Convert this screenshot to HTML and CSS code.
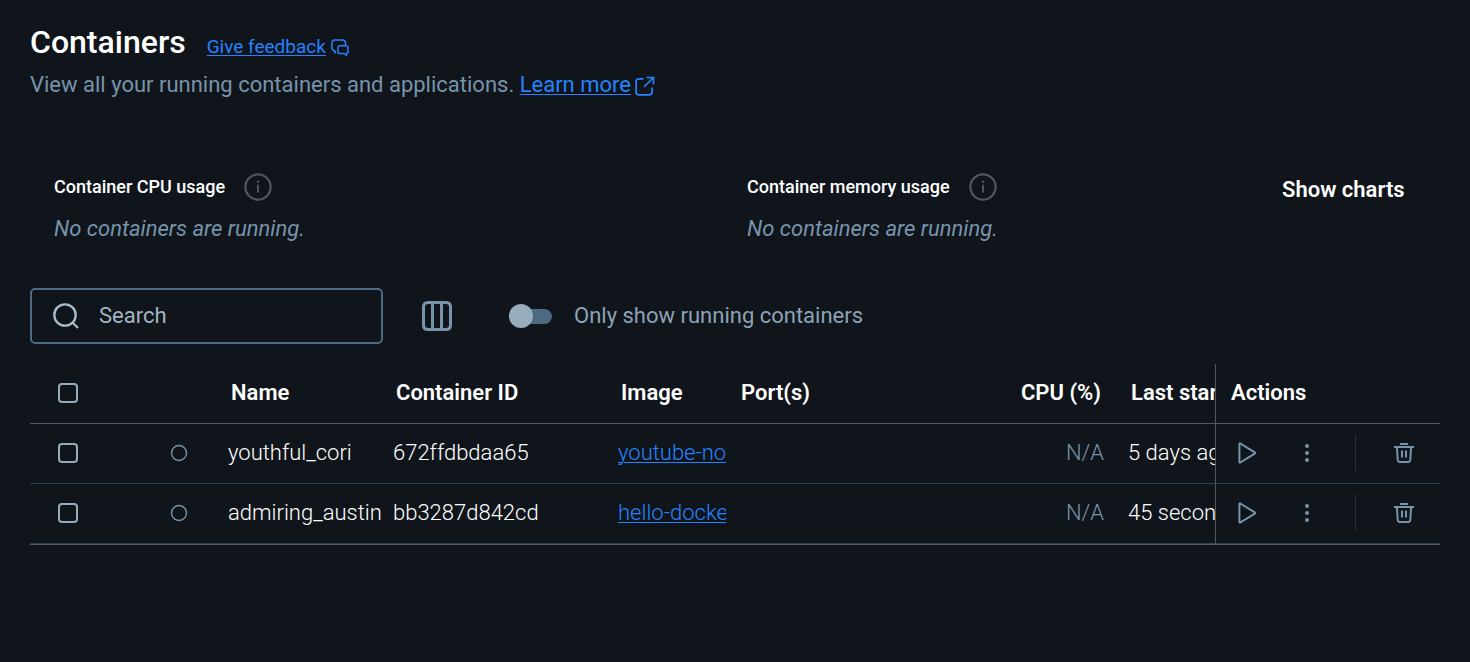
FILE: index.html
```html
<!DOCTYPE html>
<html lang="en">
<head>
<meta charset="utf-8">
<meta name="viewport" content="width=device-width, initial-scale=1">
<title>Containers</title>
<link rel="stylesheet" href="styles.css">
</head>
<body>
<svg class="defs" aria-hidden="true">
  <symbol id="i-info" viewBox="0 0 28 28"><circle cx="14" cy="14" r="12.6" fill="none" stroke="currentColor" stroke-width="2.2"/><path d="M14 12.6v6.2" stroke="currentColor" stroke-width="2" stroke-linecap="round"/><circle cx="14" cy="8.7" r="1.2" fill="currentColor"/></symbol>
  <symbol id="i-play" viewBox="0 0 20 22"><path d="M2.4 1.9v18.2c0 .5.5.7.9.4L17.800 11.6c.5-.3.5-.9 0-1.2L3.3 1.5c-.4-.3-.9-.1-.9.4z" fill="none" stroke="currentColor" stroke-width="2"/></symbol>
  <symbol id="i-more" viewBox="0 0 6 20"><circle cx="3" cy="3" r="2"/><circle cx="3" cy="10" r="2"/><circle cx="3" cy="17" r="2"/></symbol>
  <symbol id="i-trash" viewBox="0 0 20 20"><path d="M6 1h8M0 4h20M2.900 4l.8 12.800c.1 1.500.8 2.200 2.100 2.200h8.400c1.300 0 2-.7 2.100-2.200L17.100 4M8 7.500v7M12 7.500v7" fill="none" stroke="currentColor" stroke-width="2"/></symbol>
  <symbol id="i-dot" viewBox="0 0 18 18"><circle cx="9" cy="9" r="7.500" fill="none" stroke="currentColor" stroke-width="1.400"/></symbol>
</svg>
<main class="page">
  <header class="head">
    <div class="title-row">
      <h1>Containers</h1>
      <a class="link feedback" href="#">Give feedback</a>
      <svg class="feedback-icon" viewBox="0 0 18 18" aria-hidden="true"><path d="M5 12.800l-1.200 1V11.700C2 11.700 1 10.700 1 9V4c0-1.900 1-2.900 2.900-2.900h7.700c1.900 0 2.900 1 2.900 2.900v2.200M9 6.800h6c1.400 0 2 .7 2 2v3.600c0 1.300-.6 2-1.500 2v2L13 14.500H9c-1.300 0-2-.7-2-2.100V8.800c0-1.300.7-2 2-2z" fill="none" stroke="currentColor" stroke-width="1.500" stroke-linejoin="round"/></svg>
    </div>
    <p class="subtitle">View all your running containers and applications. <a class="link" href="#">Learn more</a><svg class="external" viewBox="0 0 20 20" aria-hidden="true"><path d="M8.500 2.800H4c-1.900 0-2.900 1-2.900 2.900V16c0 1.900 1 2.900 2.900 2.900h10.200c1.900 0 2.900-1 2.900-2.900v-4.500M9 11L18 2M11.500 1.500h7v7" fill="none" stroke="currentColor" stroke-width="1.700"/></svg></p>
  </header>

  <section class="usage" aria-label="Resource usage">
    <div class="metric">
      <h2>Container CPU usage <svg class="info" aria-hidden="true"><use href="#i-info"/></svg></h2>
      <p>No containers are running.</p>
    </div>
    <div class="metric">
      <h2>Container memory usage <svg class="info" aria-hidden="true"><use href="#i-info"/></svg></h2>
      <p>No containers are running.</p>
    </div>
    <button class="charts" type="button">Show charts</button>
  </section>

  <div class="toolbar">
    <label class="search">
      <svg viewBox="0 0 26 26" aria-hidden="true"><circle cx="12" cy="12" r="10.700" fill="none" stroke="currentColor" stroke-width="2.300"/><path d="M19.500 19.500L25 25" stroke="currentColor" stroke-width="2.300"/></svg>
      <input type="text" placeholder="Search" aria-label="Search">
    </label>
    <button class="icon-btn columns" type="button" aria-label="Columns"><svg viewBox="0 0 30 30"><path d="M6 1.500h18c3 0 4.500 1.500 4.500 4.500v18c0 3-1.500 4.500-4.500 4.500H6c-3 0-4.500-1.500-4.500-4.500V6c0-3 1.500-4.500 4.500-4.500zM10.500 2v26M19.500 2v26" fill="none" stroke="currentColor" stroke-width="3"/></svg></button>
    <label class="switch-label"><input class="switch" type="checkbox" role="switch">Only show running containers</label>
  </div>

  <table class="grid">
    <colgroup><col class="c-check"><col class="c-state"><col class="c-name"><col class="c-id"><col class="c-image"><col><col class="c-cpu"><col class="c-last"><col class="c-actions"></colgroup>
    <thead>
      <tr><th class="check"><input class="box" type="checkbox" aria-label="Select all"></th><th></th><th>Name</th><th>Container ID</th><th>Image</th><th>Port(s)</th><th class="num">CPU (%)</th><th>Last star</th><th class="pinned">Actions</th></tr>
    </thead>
    <tbody>
      <tr>
        <td class="check"><input class="box" type="checkbox" aria-label="Select youthful_cori"></td>
        <td class="state"><svg class="dot" aria-hidden="true"><use href="#i-dot"/></svg></td>
        <td>youthful_cori</td><td>672ffdbdaa65</td><td><a class="link" href="#">youtube-no</a></td><td></td><td class="num muted">N/A</td><td>5 days ag</td>
        <td class="pinned"><div class="actions"><button class="icon-btn" type="button" aria-label="Start"><svg class="play"><use href="#i-play"/></svg></button><button class="icon-btn" type="button" aria-label="More"><svg class="more"><use href="#i-more"/></svg></button><span class="rule"></span><button class="icon-btn" type="button" aria-label="Delete"><svg class="trash"><use href="#i-trash"/></svg></button></div></td>
      </tr>
      <tr>
        <td class="check"><input class="box" type="checkbox" aria-label="Select admiring_austin"></td>
        <td class="state"><svg class="dot" aria-hidden="true"><use href="#i-dot"/></svg></td>
        <td>admiring_austin</td><td>bb3287d842cd</td><td><a class="link" href="#">hello-docke</a></td><td></td><td class="num muted">N/A</td><td>45 secon</td>
        <td class="pinned"><div class="actions"><button class="icon-btn" type="button" aria-label="Start"><svg class="play"><use href="#i-play"/></svg></button><button class="icon-btn" type="button" aria-label="More"><svg class="more"><use href="#i-more"/></svg></button><span class="rule"></span><button class="icon-btn" type="button" aria-label="Delete"><svg class="trash"><use href="#i-trash"/></svg></button></div></td>
      </tr>
    </tbody>
  </table>
</main>
</body>
</html>
```
FILE: styles.css
```css
* { box-sizing: border-box; }
body {
  margin: 0;
  background: #10151b;
  color: #fff;
  font: 400 22px/30px Roboto, sans-serif;
}
h1, h2, p { margin: 0; }
svg { display: block; flex: none; }
.defs { position: absolute; width: 0; height: 0; }
.page { padding: 20px 30px; }
.link { color: #2583ff; text-decoration: underline; text-decoration-thickness: 1px; text-underline-offset: 2px; }

.title-row { display: flex; align-items: baseline; }
h1 { font-size: 32px; line-height: 44px; font-weight: 500; }
.feedback { margin-left: 21px; font-size: 19px; }
.feedback-icon { width: 18px; height: 18px; margin-left: 5px; align-self: center; margin-top: 12px; color: #2583ff; }
.subtitle { display: flex; align-items: center; margin-top: 6px; color: #7794ab; white-space: pre; }
.external { width: 20px; height: 20px; margin-left: 4px; margin-top: 2px; color: #2583ff; }

.usage { display: flex; align-items: flex-start; margin-top: 72px; padding: 0 24px; }
.metric { flex: 1 1 0; }
.metric:nth-child(2) { flex: none; width: 535px; }
.metric:first-child { max-width: 693px; }
h2 { display: flex; align-items: center; gap: 19px; font-size: 18px; line-height: 30px; font-weight: 500; }
.info { width: 28px; height: 28px; color: #52565b; }
.metric p { margin-top: 12px; color: #7794ab; font-style: italic; }
button { border: 0; padding: 0; background: none; font: inherit; color: inherit; cursor: pointer; }
.charts { font-weight: 600; margin-top: 3px; }

.toolbar { display: flex; align-items: center; margin-top: 44px; }
.search { display: flex; align-items: center; gap: 20px; width: 353px; height: 56px; padding: 0 21px; border: 2px solid #4c6a82; border-radius: 5px; color: #a9bccb; }
.search svg { width: 26px; height: 26px; }
.search input { min-width: 0; flex: 1; padding: 0; border: 0; outline: 0; background: none; color: inherit; font: inherit; }
.search input::placeholder { color: #a3b4c1; opacity: 1; }
.icon-btn { color: #7794ab; fill: currentColor; }
.columns { margin-left: 39px; }
.columns svg { width: 30px; height: 30px; }
.switch-label { display: flex; align-items: center; gap: 22px; margin-left: 57px; color: #8ca3b6; }
.switch { appearance: none; display: flex; align-items: center; width: 43px; height: 15px; margin: 0; border-radius: 8px; background: #4c6a82; }
.switch::before { content: ""; width: 24px; height: 24px; border-radius: 50%; background: #97adbe; }
.switch:checked::before { margin-left: 19px; }

.grid { width: 100%; margin-top: 20px; table-layout: fixed; border-collapse: separate; border-spacing: 0; border-bottom: 1px solid #5b5b59; }
.c-check { width: 120px; }
.c-state { width: 66px; }
.c-name { width: 165px; }
.c-id { width: 225px; }
.c-image { width: 120px; }
.c-cpu { width: 120px; }
.c-last { width: 99px; }
.c-actions { width: 225px; }
th, td { height: 60px; padding: 0 0 2px 12px; overflow: hidden; white-space: nowrap; text-align: left; vertical-align: middle; border-bottom: 1px solid #2f4050; font-weight: 300; }
th { padding-left: 15px; font-weight: 600; border-bottom-color: #555857; }
.num { padding-left: 0; padding-right: 12px; text-align: right; }
th.num { padding-right: 15px; }
.muted { color: #7794ab; }
.check { padding-left: 28px; }
.box { appearance: none; display: block; width: 20px; height: 20px; margin: 0; border: 2px solid #97adbe; border-radius: 4px; }
.box:checked { background: #2583ff; }
.state { padding-left: 20px; }
.dot { width: 18px; height: 18px; color: #7794ab; }
.pinned { border-left: 1px solid #555857; }
td.pinned { padding-left: 1px; }
.actions { display: flex; align-items: center; }
.actions .icon-btn { display: flex; align-items: center; justify-content: center; width: 60px; height: 48px; }
.play { width: 20px; height: 22px; }
.more { width: 6px; height: 20px; }
.trash { width: 20px; height: 20px; }
.rule { width: 1px; height: 36px; margin: 0 18px; background: #2c3036; }
```
